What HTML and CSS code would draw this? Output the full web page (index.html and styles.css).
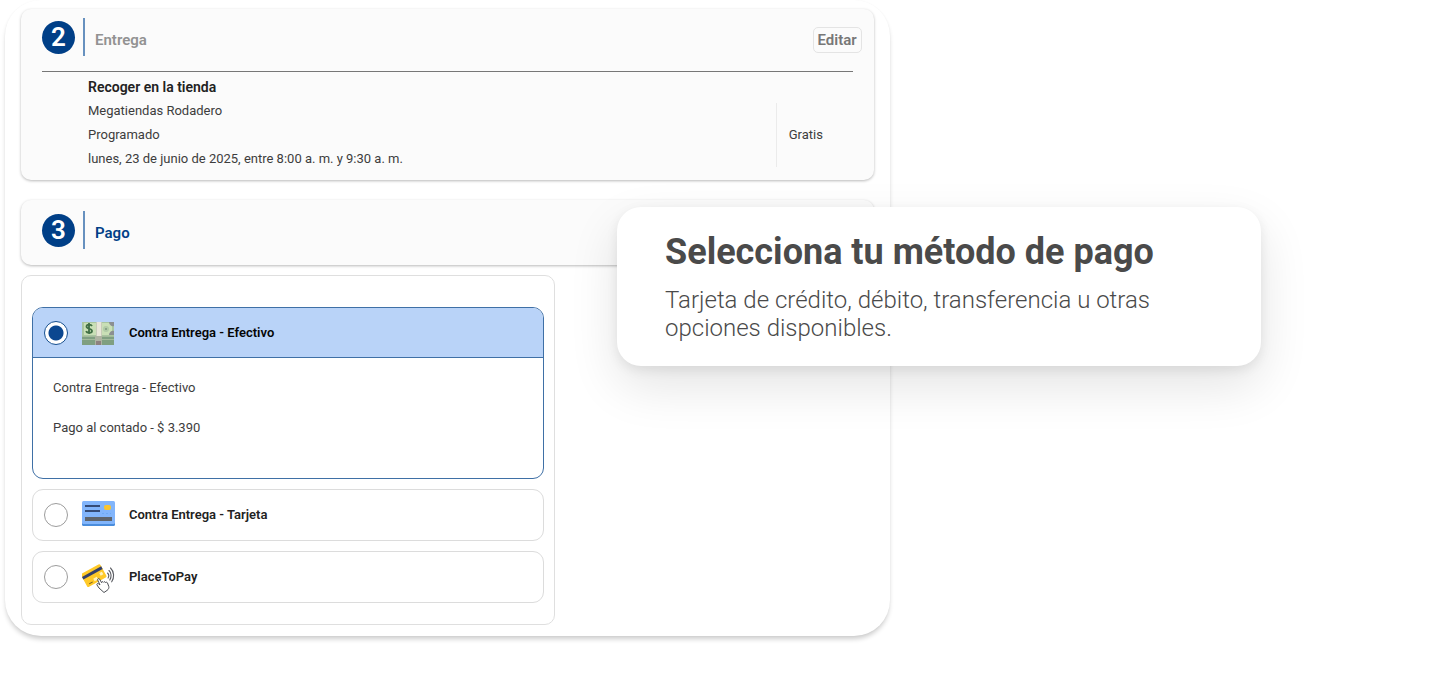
FILE: index.html
```html
<!DOCTYPE html>
<html lang="es">
<head>
<meta charset="utf-8">
<meta name="viewport" content="width=device-width, initial-scale=1">
<title>Método de pago</title>
<link rel="stylesheet" href="styles.css">
</head>
<body>
<main class="stage">
  <div class="panel">
    <section class="card card-delivery">
      <header class="card-head">
        <span class="step">2</span>
        <h2 class="card-title muted">Entrega</h2>
        <button class="edit" type="button">Editar</button>
      </header>
      <div class="delivery">
        <div class="delivery-info">
          <h3 class="delivery-title">Recoger en la tienda</h3>
          <p>Megatiendas Rodadero</p>
          <p>Programado</p>
          <p>lunes, 23 de junio de 2025, entre 8:00 a. m. y 9:30 a. m.</p>
        </div>
        <p class="delivery-cost">Gratis</p>
      </div>
    </section>

    <section class="card card-payment">
      <header class="card-head">
        <span class="step">3</span>
        <h2 class="card-title">Pago</h2>
      </header>
    </section>

    <form class="methods">
      <div class="method selected">
        <label class="method-head" for="cash">
          <input class="radio" type="radio" name="method" id="cash" checked>
          <svg class="icon" viewBox="0 0 33 33" aria-hidden="true">
            <path fill="#7f9f81" d="M0 18h32v11H0z"/>
            <path fill="#a3b99b" d="M0 20h32v1H0zM0 23h32v1H0z"/>
            <path fill="#a9c5a0" d="M0 6h32v14H0z"/>
            <path fill="#c9dfb6" d="M2 7h28v12H2z"/>
            <circle cx="24" cy="13" r="3" fill="#b1cba7"/>
            <path fill="#8b8f91" d="M27 6h5v4a4 4 0 0 1-5-4zM32 15v4h-5a4 4 0 0 1 5-4z"/>
            <circle cx="24" cy="13" r="1" fill="#7e967d"/>
            <path d="M10 10c-1-2-5.500-2-5.500.5 0 3 5.500 1.500 5.500 4.500 0 2.500-5 2.500-6 .2M7 7v11" fill="none" stroke="#406f45" stroke-width="1.800"/>
            <path fill="#e8e6d8" d="M14 6h6v14h-6z"/>
            <path fill="#c7cbb8" d="M14 6h1v14h-1zM19 6h1v14h-1z"/>
            <path fill="#aeb3a2" d="M13 20h7v9h-7z"/>
            <path fill="#8d817f" d="M14 25h5v4h-5z"/>
          </svg>
          <span class="method-name">Contra Entrega - Efectivo</span>
        </label>
        <div class="method-body">
          <p>Contra Entrega - Efectivo</p>
          <p>Pago al contado - $ 3.390</p>
        </div>
      </div>

      <div class="method">
        <label class="method-head" for="card">
          <input class="radio" type="radio" name="method" id="card">
          <svg class="icon" viewBox="0 0 33 33" aria-hidden="true">
            <rect x="0" y="4" width="33" height="23" rx="1.500" fill="#4a8ddc"/>
            <rect x="0" y="2" width="33" height="23" rx="1.500" fill="#82b5fb"/>
            <path fill="#354b76" d="M3 6h15v2H3zM3 11h15v2H3z"/>
            <rect x="22" y="6" width="7" height="5" rx="2" fill="#fbc52d"/>
            <path fill="#6eaaf4" d="M20 14h2v1h-2zM24 14h2v1h-2zM28 14h1v1h-1z"/>
            <path fill="#5f646b" d="M3 18h27v4H3z"/>
          </svg>
          <span class="method-name">Contra Entrega - Tarjeta</span>
        </label>
      </div>

      <div class="method">
        <label class="method-head" for="placetopay">
          <input class="radio" type="radio" name="method" id="placetopay">
          <svg class="icon" viewBox="0 0 33 33" aria-hidden="true">
            <g transform="rotate(-29 12 15)">
              <rect x="1" y="7" width="22" height="15" rx="1.500" fill="#ffc928"/>
              <path fill="#35406a" d="M1 10h22v3H1z"/>
              <path fill="#fff2bd" d="M10 17h4v3h-4zM18 15h3v3h-3z"/>
              <path fill="#76601f" d="M4 19h4v1H4z"/>
            </g>
            <path d="M17 27l-2-3c-.6-1.200.7-2 1.600-1.200l1.400 1.200-2.300-5c-.5-1.300 1.300-2.100 2-.8l1.800 3.400c.2-1 1.500-1.300 2-.3.500-.8 1.600-.8 2 .2.600-.6 1.700-.3 2 .5l1.300 3.500c.4 1.400-.4 2.900-1.600 3.800L22 31.500z" fill="#fff" stroke="#4c4f55" stroke-width="1"/>
            <path d="M25.500 12c1.300 1.200 1.500 3.500.6 5M27 9.500c2.500 2.400 2.700 6.500.8 9.500M28.500 7c3.800 3.700 4 9.500 1.200 13.800" fill="none" stroke="#5b5d63" stroke-width="1.100" stroke-linecap="round"/>
          </svg>
          <span class="method-name">PlaceToPay</span>
        </label>
      </div>
    </form>
  </div>

  <aside class="callout">
    <h1 class="callout-title">Selecciona tu método de pago</h1>
    <p class="callout-text">Tarjeta de crédito, débito, transferencia u otras opciones disponibles.</p>
  </aside>
</main>
</body>
</html>
```
FILE: styles.css
```css
* {
  box-sizing: border-box;
}

body {
  margin: 0;
  background: #fff;
  color: #3d3d3d;
  font-family: Roboto, "Liberation Sans", sans-serif;
  font-size: 13px;
  line-height: 24px;
}

h1, h2, h3, p {
  margin: 0;
}

.stage {
  position: relative;
  padding: 0 5px 48px;
}

.panel {
  width: 62.3%;
  padding: 9px 16px 11px;
  border-radius: 36px;
  background: #fff;
  box-shadow: 0 4px 5px -1px rgba(0, 0, 0, 0.2), 0 0 2px rgba(0, 0, 0, 0.04);
}

.card {
  padding: 9px 12px 9px 21px;
  border-radius: 10px;
  background: #fbfbfb;
  box-shadow: 0 1px 3px rgba(0, 0, 0, 0.28);
}

.card-delivery {
  margin-bottom: 20px;
}

.card-payment {
  margin-bottom: 10px;
  padding-top: 11px;
  padding-bottom: 16px;
}

.card-head {
  display: flex;
  align-items: center;
  gap: 8px;
}

.step {
  display: grid;
  place-items: center;
  width: 33px;
  height: 33px;
  border-radius: 50%;
  background: #003f87;
  color: #fff;
  font-size: 26px;
  font-weight: 600;
}

.card-title {
  padding: 10px 0 4px 10px;
  border-left: 2px solid #6791bf;
  color: #003f87;
  font-size: 15px;
  font-weight: 600;
}

.card-title.muted {
  color: #929292;
}

.edit {
  margin: 6px 0 0 auto;
  padding: 0 4px;
  border: 1px solid #e4e4e4;
  border-radius: 5px;
  background: #fbfbfb;
  color: #777;
  font: inherit;
  font-size: 15px;
  font-weight: 600;
}

.delivery {
  display: flex;
  align-items: flex-end;
  margin: 15px 9px 0 0;
  padding-left: 46px;
  border-top: 1px solid #777;
}

.delivery-info {
  flex: 1;
  padding-top: 3px;
}

.delivery-title {
  color: #222;
  font-size: 14px;
  font-weight: 600;
}

.delivery-cost {
  width: 77px;
  margin-bottom: 4px;
  padding: 20px 0 20px 12px;
  border-left: 1px solid #ebebeb;
}

.methods {
  display: grid;
  gap: 10px;
  width: 62.6%;
  padding: 31px 10px 21px;
  border: 1px solid #dfdfdf;
  border-radius: 10px;
}

.method {
  border: 1px solid #dcdcdc;
  border-radius: 11px;
  overflow: hidden;
}

.method-head {
  display: flex;
  align-items: center;
  height: 50px;
  padding-left: 11px;
  color: #222;
  font-weight: 600;
  cursor: pointer;
}

.method.selected {
  border-color: #3f70a6;
}

.selected .method-head {
  border-bottom: 1px solid #3f70a6;
  background: #b9d3f8;
  color: #050505;
}

.radio {
  appearance: none;
  width: 24px;
  height: 24px;
  margin: 0 14px 0 0;
  border: 1px solid #9c9c9c;
  border-radius: 50%;
  background: #fff;
}

.radio:checked {
  border-color: #175090;
  background: radial-gradient(circle, #0b4790 7px, #fff 8px);
}

.icon {
  width: 33px;
  height: 33px;
  margin-right: 14px;
}

.method-body {
  display: grid;
  gap: 16px;
  padding: 18px 20px 38px;
}

.callout {
  position: absolute;
  top: 207px;
  left: 43.15%;
  width: 644px;
  max-width: 55%;
  padding: 23px 48px 24px;
  border-radius: 24px;
  background: #fff;
  color: #4a4a4a;
  box-shadow: 0 20px 50px rgba(0, 0, 0, 0.11), 0 4px 12px rgba(0, 0, 0, 0.08);
}

.callout-title {
  margin-bottom: 12px;
  font-size: 36px;
  font-weight: 700;
  line-height: 44px;
}

.callout-text {
  font-size: 24px;
  font-weight: 300;
  line-height: 28px;
}
```
